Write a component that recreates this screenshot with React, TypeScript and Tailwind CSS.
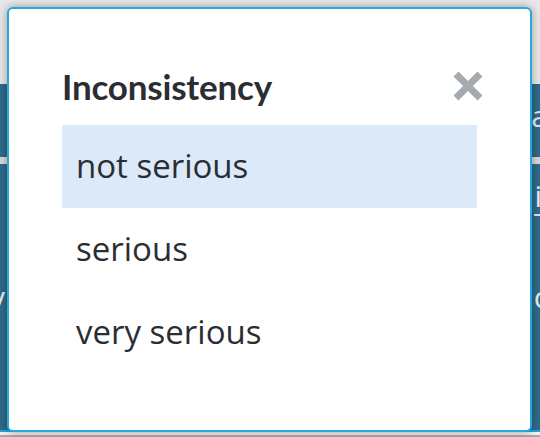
import React from 'react'

const options = ['not serious', 'serious', 'very serious']

export default function App() {
  return (
    <div className="relative w-[540px] h-[437px] overflow-hidden bg-[#ececec] font-['Open_Sans',sans-serif]">
      {/* background page, behind the modal */}
      <div className="flex flex-col h-full">
        <div className="h-[84px] bg-[#e9e9e9]" />
        <div className="h-[73px] bg-[#2e6a88] flex justify-end items-center text-[30px] text-[#e6eef3] pb-[10px]">
          <span className="mr-[-8px]">a</span>
        </div>
        <div className="h-[7px] bg-[#d8d8d8]" />
        <div className="flex-1 bg-[#2e6b89] flex flex-col text-[30px] text-[#e6eef3]">
          <div className="flex justify-end pt-[14px]">
            <span className="mr-[-2px] border-b-2 border-[#dfe6ea] leading-[36px]">i</span>
          </div>
          <div className="flex justify-between mt-[58px]">
            <span className="-ml-[10px]">y</span>
            <span className="mr-[-8px]">c</span>
          </div>
        </div>
        <div className="h-[2px] bg-[#24a3dc]" />
        <div className="h-[3px] bg-[#f2f2f2]" />
        <div className="h-[2px] bg-[#a9a9a9]" />
      </div>

      {/* modal */}
      <div className="absolute left-[7px] top-[7px] w-[525px] h-[425px] bg-white border-2 border-[#29a7df] rounded-[6px] shadow-[0_0_10px_rgba(0,0,0,0.35)] pl-[53px] pr-[53px] text-[#2a2e33]">
        <div className="flex items-center justify-between h-[116px] pt-[46px] pb-[8px]">
          <h2 className="font-['Lato',sans-serif] font-bold text-[35px] leading-none tracking-[-0.2px]">Inconsistency</h2>
          <svg width="32" height="30" viewBox="0 0 32 30" className="mr-[-7px] mt-[-1px]">
            <path d="M4 3 L28 27 M28 3 L4 27" stroke="#a4aab0" strokeWidth="7" />
          </svg>
        </div>
        <ul className="flex flex-col">
          {options.map((o, i) => (
            <li
              key={o}
              className={`h-[83px] flex items-center pl-[14px] pb-[2px] text-[33px] ${i === 0 ? 'bg-[#dce9f8]' : ''}`}
            >
              {o}
            </li>
          ))}
        </ul>
      </div>
    </div>
  )
}
